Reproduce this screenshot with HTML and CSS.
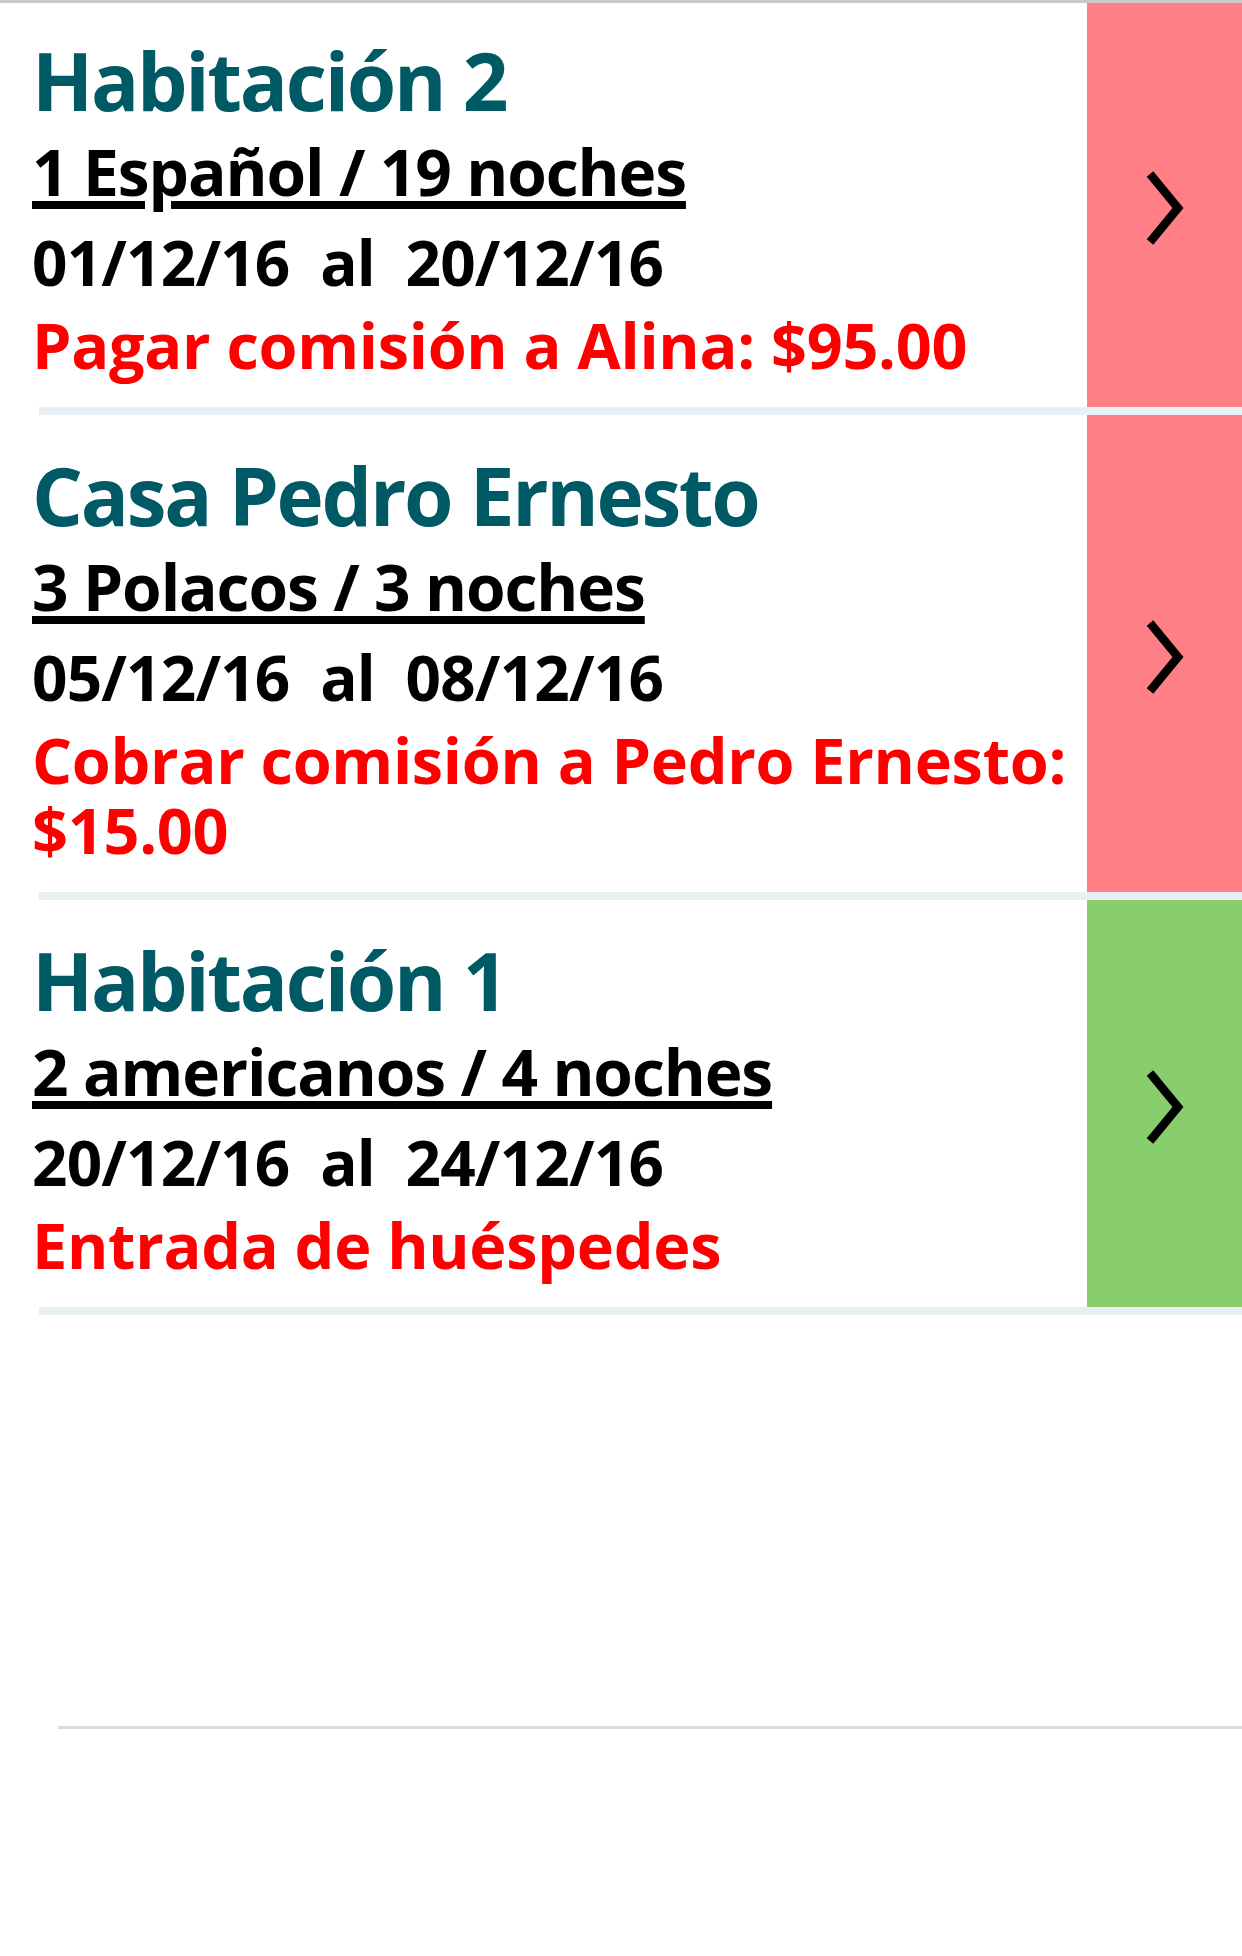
FILE: index.html
```html
<!DOCTYPE html>
<html lang="es">
<head>
<meta charset="utf-8">
<title>Reservas</title>
<link rel="stylesheet" href="styles.css">
</head>
<body>
<div class="topline"></div>
<ul class="list">
  <li class="item">
    <div class="row">
      <div class="info">
        <h2 class="title">Habitación 2</h2>
        <p class="guests">1 Español / 19 noches</p>
        <p class="dates">01/12/16&nbsp; al&nbsp; 20/12/16</p>
        <p class="note">Pagar comisión a Alina: $95.00</p>
      </div>
      <div class="action pink">
        <svg class="chev" viewBox="0 0 48 84" width="48" height="84"><polyline points="9,8 37,42 9,76" fill="none" stroke="#000" stroke-width="8.5" stroke-linejoin="miter"/></svg>
      </div>
    </div>
  </li>
  <li class="item">
    <div class="row">
      <div class="info">
        <h2 class="title">Casa Pedro Ernesto</h2>
        <p class="guests">3 Polacos / 3 noches</p>
        <p class="dates">05/12/16&nbsp; al&nbsp; 08/12/16</p>
        <p class="note">Cobrar comisión a Pedro Ernesto: $15.00</p>
      </div>
      <div class="action pink">
        <svg class="chev" viewBox="0 0 48 84" width="48" height="84"><polyline points="9,8 37,42 9,76" fill="none" stroke="#000" stroke-width="8.5" stroke-linejoin="miter"/></svg>
      </div>
    </div>
  </li>
  <li class="item">
    <div class="row">
      <div class="info">
        <h2 class="title">Habitación 1</h2>
        <p class="guests">2 americanos / 4 noches</p>
        <p class="dates">20/12/16&nbsp; al&nbsp; 24/12/16</p>
        <p class="note">Entrada de huéspedes</p>
      </div>
      <div class="action green">
        <svg class="chev" viewBox="0 0 48 84" width="48" height="84"><polyline points="9,8 37,42 9,76" fill="none" stroke="#000" stroke-width="8.5" stroke-linejoin="miter"/></svg>
      </div>
    </div>
  </li>
</ul>
<div class="footer"></div>
</body>
</html>
```
FILE: styles.css
```css
html, body {
  margin: 0;
  padding: 0;
  background: #ffffff;
}
body {
  font-family: "Open Sans", "Liberation Sans", sans-serif;
  font-weight: 700;
  color: #000;
  width: 1242px;
  min-height: 1956px;
}
.topline {
  height: 3px;
  background: #c9c9c9;
}
.list {
  list-style: none;
  margin: 0;
  padding: 0;
}
.item::after {
  content: "";
  display: block;
  height: 8px;
  margin-left: 39px;
  background: #e7f0f4;
}
.row {
  display: flex;
  align-items: stretch;
}
.info {
  flex: 1;
  min-width: 0;
  padding: 31px 0 27px 32px;
}
.item:first-child .info {
  padding-top: 28px;
}
.title {
  margin: 0;
  font-size: 80px;
  line-height: 97px;
  font-weight: 700;
  color: #005a65;
  letter-spacing: -2.3px;
}
.guests {
  margin: 0;
  font-size: 64px;
  line-height: 87px;
  letter-spacing: -1.1px;
  text-decoration: underline;
  text-decoration-thickness: 8px;
  text-underline-offset: 5px;
}
.dates {
  margin: 0;
  font-size: 62px;
  line-height: 95px;
  letter-spacing: -0.8px;
}
.note {
  margin: 0;
  font-size: 63px;
  line-height: 70px;
  letter-spacing: -0.3px;
  color: #ff0000;
}
.action {
  width: 155px;
  flex: none;
  display: flex;
  align-items: center;
  justify-content: center;
}
.pink {
  background: #ff7f87;
}
.green {
  background: #88ce6f;
}
.chev {
  display: block;
  margin-top: 6px;
}
.footer {
  margin: 411px 0 0 58px;
  border-top: 3px solid #dadada;
}
```
